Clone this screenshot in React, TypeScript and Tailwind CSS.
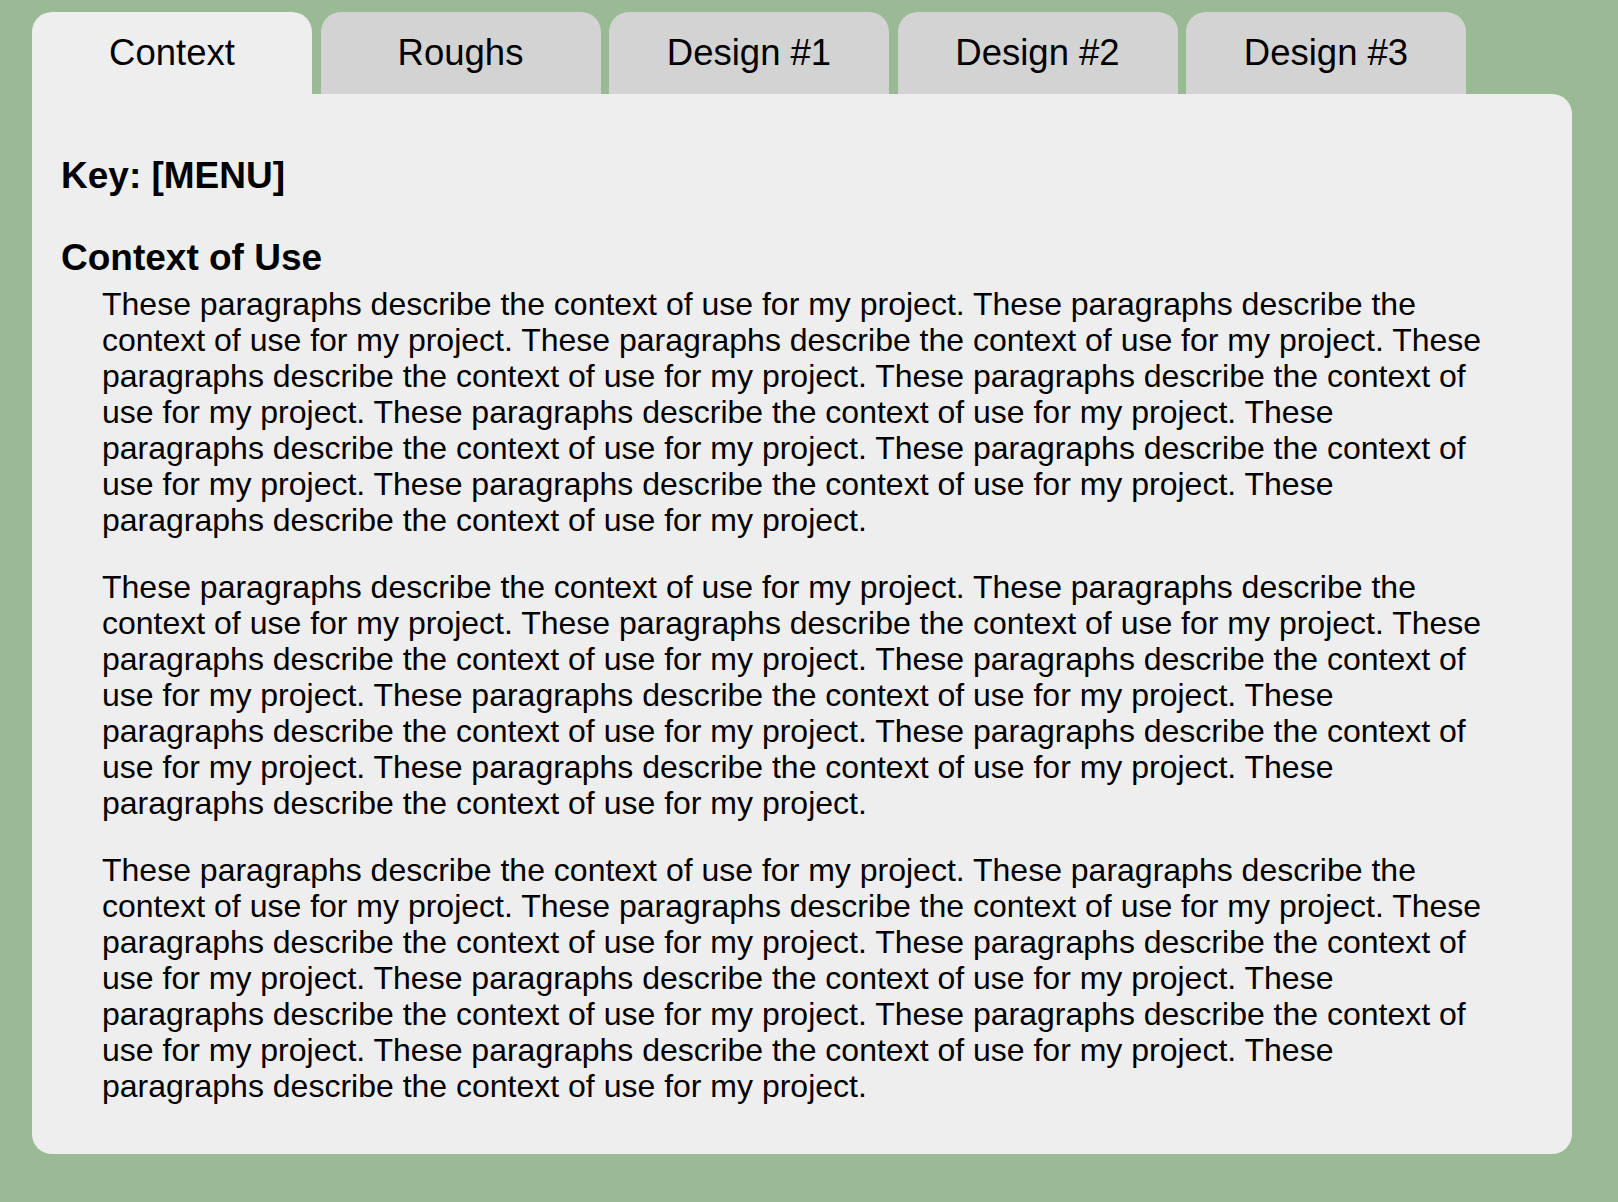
const tabs = ['Context', 'Roughs', 'Design #1', 'Design #2', 'Design #3']

const sentence = 'These paragraphs describe the context of use for my project.'
const para = Array(10).fill(sentence).join(' ')

export default function App() {
  const active = 0

  return (
    <main
      className="min-h-[1202px] bg-[#99ba94] pt-3 pl-8 text-black"
      style={{ fontFamily: '"Liberation Sans", Arial, Helvetica, sans-serif' }}
    >
      <div className="w-[1540px]">
        <nav className="flex gap-[8.5px]">
          {tabs.map((t, i) => (
            <button
              key={t}
              className={
                'flex h-[82px] w-[280px] items-center justify-center rounded-t-[20px] text-[36.5px] leading-none ' +
                (i === active ? 'bg-[#eeeeee]' : 'bg-[#d3d3d3]')
              }
            >
              {t}
            </button>
          ))}
        </nav>

        <section className="rounded-b-[20px] rounded-tr-[20px] bg-[#eeeeee] pt-[60px] pr-[70px] pb-[50px] pl-[29px]">
          <h3 className="text-[37px] font-bold leading-[43px]">Key: [MENU]</h3>
          <h3 className="mt-[39px] text-[37px] font-bold leading-[43px]">Context of Use</h3>
          <div className="mt-[7px] ml-[41px] space-y-[31px] text-[32px] leading-[36px]">
            <p>{para}</p>
            <p>{para}</p>
            <p>{para}</p>
          </div>
        </section>
      </div>
    </main>
  )
}
